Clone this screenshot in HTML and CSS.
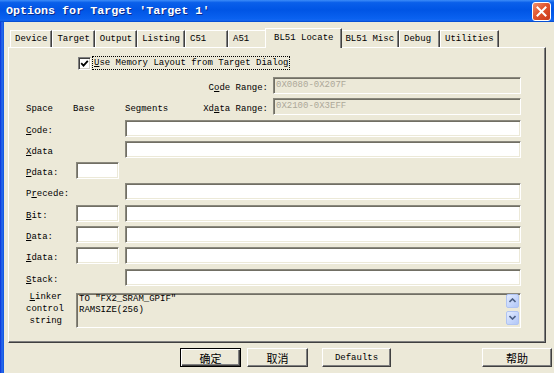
FILE: index.html
```html
<!DOCTYPE html>
<html lang="en">
<head>
  <meta charset="UTF-8" />
  <title>Options for Target</title>
  <link rel="stylesheet" href="styles.css">
</head>
<body>
  <div class="window">
    <!-- Title bar -->
    <div class="titlebar">
      <span class="title">Options for Target 'Target 1'</span>
      <span class="close">
        <svg width="11" height="11" viewBox="0 0 11 11"><path d="M1.5 1.5 L9.5 9.5 M9.5 1.5 L1.5 9.5" stroke="#fff" stroke-width="2" stroke-linecap="square"/></svg>
      </span>
    </div>

    <div class="frame">
      <div class="frame-edge"></div>
      <div class="client">
        <!-- Tabs -->
        <div class="tabs">
          <span class="tab">Device</span>
          <span class="tab">Target</span>
          <span class="tab">Output</span>
          <span class="tab">Listing</span>
          <span class="tab tab-c51">C51</span>
          <span class="tab tab-a51">A51</span>
          <span class="tab tab-active">BL51 Locate</span>
          <span class="tab">BL51 Misc</span>
          <span class="tab tab-debug">Debug</span>
          <span class="tab">Utilities</span>
        </div>

        <!-- Tab page -->
        <div class="panel">
          <div class="check-row">
            <span class="checkbox">
              <svg width="9" height="9" viewBox="0 0 9 9"><path d="M1.2 4.2 L3.5 6.6 L7.8 1.8" fill="none" stroke="#000" stroke-width="1.8"/></svg>
            </span>
            <span class="check-label"><u>U</u>se Memory Layout from Target Dialog</span>
          </div>

          <div class="form">
            <div class="range-row">
              <span class="lbl">C<u>o</u>de Range:</span>
              <div class="field disabled range">0X0080-0X207F</div>
            </div>

            <span class="lbl">Space</span>
            <span class="lbl head-base">Base</span>
            <div class="seg-head">
              <span class="lbl">Segments</span>
              <span class="lbl range-lbl">Xd<u>a</u>ta Range:</span>
              <div class="field disabled range">0X2100-0X3EFF</div>
            </div>

            <span class="lbl"><u>C</u>ode:</span>
            <span></span>
            <div class="field"></div>

            <span class="lbl"><u>X</u>data</span>
            <span></span>
            <div class="field"></div>

            <span class="lbl"><u>P</u>data:</span>
            <div class="field base"></div>
            <span></span>

            <span class="lbl">P<u>r</u>ecede:</span>
            <span></span>
            <div class="field"></div>

            <span class="lbl"><u>B</u>it:</span>
            <div class="field base"></div>
            <div class="field"></div>

            <span class="lbl"><u>D</u>ata:</span>
            <div class="field base"></div>
            <div class="field"></div>

            <span class="lbl"><u>I</u>data:</span>
            <div class="field base"></div>
            <div class="field"></div>

            <span class="lbl"><u>S</u>tack:</span>
            <span></span>
            <div class="field"></div>

            <div class="lbl-multi"><u>L</u>inker<br>control<br>string</div>
            <div class="field area">
              <div class="area-text">TO "FX2_SRAM_GPIF"<br>RAMSIZE(256)</div>
              <div class="area-scroll">
                <span class="scroll-btn">
                  <svg width="7" height="5" viewBox="0 0 7 5"><path d="M0.5 4 L3.5 1 L6.5 4" fill="none" stroke="#4D6185" stroke-width="1.6"/></svg>
                </span>
                <span class="scroll-btn">
                  <svg width="7" height="5" viewBox="0 0 7 5"><path d="M0.5 1 L3.5 4 L6.5 1" fill="none" stroke="#4D6185" stroke-width="1.6"/></svg>
                </span>
              </div>
            </div>
          </div>
        </div>

        <!-- Dialog buttons -->
        <div class="buttons">
          <span class="btn btn-default cjk">确定</span>
          <span class="btn btn-cancel cjk">取消</span>
          <span class="btn btn-defaults">Defaults</span>
          <span class="btn btn-help cjk">帮助</span>
        </div>
      </div>
    </div>
  </div>
</body>
</html>
```

FILE: styles.css
```css
/* Page */
* {
  box-sizing: border-box;
}

body {
  margin: 0;
  width: 554px;
  height: 373px;
  overflow: hidden;
  background: #ECE9D8;
  color: #000;
  font-family: "Liberation Mono", "DejaVu Sans Mono", monospace;
  font-size: 9px;
}

.window {
  display: flex;
  flex-direction: column;
  height: 373px;
}

/* Title bar */
.titlebar {
  height: 22px;
  display: flex;
  align-items: center;
  padding: 0 3px 0 6px;
  background: linear-gradient(to bottom, #3C8CF8 0%, #0A5FEA 12%, #0055E5 45%, #0A62F0 85%, #1466F2 92%, #0046C8 100%);
}

.title {
  flex: 1;
  color: #fff;
  font-weight: bold;
  font-size: 11.7px;
  text-shadow: 1px 1px #0A2A8A;
  white-space: nowrap;
}

.close {
  width: 19px;
  height: 19px;
  border: 1px solid #fff;
  border-radius: 3px;
  background: linear-gradient(135deg, #F09070 0%, #E2552E 45%, #C8391B 100%);
  display: flex;
  align-items: center;
  justify-content: center;
}

/* Frame + client */
.frame {
  flex: 1;
  display: flex;
}

.frame-edge {
  width: 4px;
  background: linear-gradient(to right, #0831D9, #2A6CEC 50%, #0E55E0);
}

.client {
  flex: 1;
  display: flex;
  flex-direction: column;
  padding: 6px 0 0 4px;
}

/* Tabs */
.tabs {
  display: flex;
  align-items: flex-end;
  height: 19px;
  padding-left: 2px;
}

.tab {
  height: 17px;
  line-height: 17px;
  padding: 0 4px;
  white-space: nowrap;
  border-top: 1px solid #fff;
  border-left: 1px solid #fff;
  border-right: 1px solid #404040;
  box-shadow: inset -1px 0 #808080;
}
.tab-c51 { min-width: 43px; }
.tab-a51 { min-width: 39px; }
.tab-debug { min-width: 41px; }

.tab-active {
  position: relative;
  z-index: 1;
  height: 20px;
  line-height: 18px;
  margin: 0 -2px -1px -2px;
  padding: 0 8px;
  background: #ECE9D8;
}

/* Tab page */
.panel {
  width: 538px;
  height: 296px;
  padding: 8px 24px 0 17px;
  border: 1px solid;
  border-color: #fff #404040 #404040 #fff;
  box-shadow: inset -1px -1px #808080;
}

.check-row {
  display: flex;
  align-items: center;
  height: 14px;
  margin-left: 52px;
}

.checkbox {
  width: 13px;
  height: 13px;
  background: #fff;
  border: 1px solid;
  border-color: #808080 #fff #fff #808080;
  box-shadow: inset 1px 1px #404040, inset -1px -1px #D4D0C8;
  display: flex;
  align-items: center;
  justify-content: center;
}

.check-label {
  margin-left: 1px;
  padding: 0 1px;
  line-height: 12px;
  border: 1px dotted #000;
  white-space: nowrap;
}

/* Memory layout grid */
.form {
  display: grid;
  grid-template-columns: 50px 49px 396px;
  row-gap: 4.3px;
  margin-top: 7px;
}

.range-row {
  grid-column: 1 / -1;
  display: flex;
  justify-content: flex-end;
}

.seg-head {
  display: flex;
}
.seg-head .range-lbl {
  margin-left: auto;
}

.lbl {
  padding-top: 6px;
  line-height: 11px;
  white-space: nowrap;
}
.head-base {
  margin-left: -3px;
}

.field {
  height: 17px;
  background: #fff;
  border: 1px solid;
  border-color: #8A887D #fff #fff #8A887D;
  box-shadow: inset 1px 1px #716F64, inset -1px -1px #ECE9D8;
}
.field.disabled {
  background: #ECE9D8;
  color: #ACA899;
  padding-left: 2px;
  line-height: 14px;
}
.range {
  width: 248px;
  margin-left: 5px;
}
.base {
  width: 43px;
}

/* Linker control string */
.lbl-multi {
  margin-top: 1px;
  padding-right: 14px;
  line-height: 12px;
  text-align: right;
}

.area {
  grid-column: 2 / 4;
  height: 35px;
  margin-top: 3px;
  background: #ECE9D8;
  display: flex;
  padding: 0 1px 0 1px;
}
.area-text {
  flex: 1;
  padding-left: 1px;
  line-height: 11.5px;
  white-space: nowrap;
}
.area-scroll {
  display: flex;
  flex-direction: column;
  gap: 3px;
}
.scroll-btn {
  width: 13px;
  height: 14px;
  border: 1px solid #B0C4F2;
  border-radius: 2px;
  background: linear-gradient(135deg, #E4ECFE 0%, #C4D5FB 60%, #B2C7F6 100%);
  display: flex;
  align-items: center;
  justify-content: center;
}

/* Dialog buttons */
.buttons {
  display: flex;
  height: 19px;
  margin-top: 5px;
  padding-left: 172px;
}

.btn {
  width: 61px;
  height: 19px;
  display: flex;
  align-items: center;
  justify-content: center;
  border: 1px solid;
  border-color: #fff #404040 #404040 #fff;
  box-shadow: inset -1px -1px #808080;
  white-space: nowrap;
}
.cjk {
  font-family: "Noto Sans CJK SC", sans-serif;
  font-size: 11px;
}
.btn-default {
  border-color: #000;
  box-shadow: inset 1px 1px #fff, inset -1px -1px #404040, inset -2px -2px #808080;
}
.btn-cancel {
  margin-left: 6px;
}
.btn-defaults {
  width: 69px;
  margin-left: 14px;
}
.btn-help {
  width: 70px;
  margin-left: auto;
  margin-right: 2px;
}
```
